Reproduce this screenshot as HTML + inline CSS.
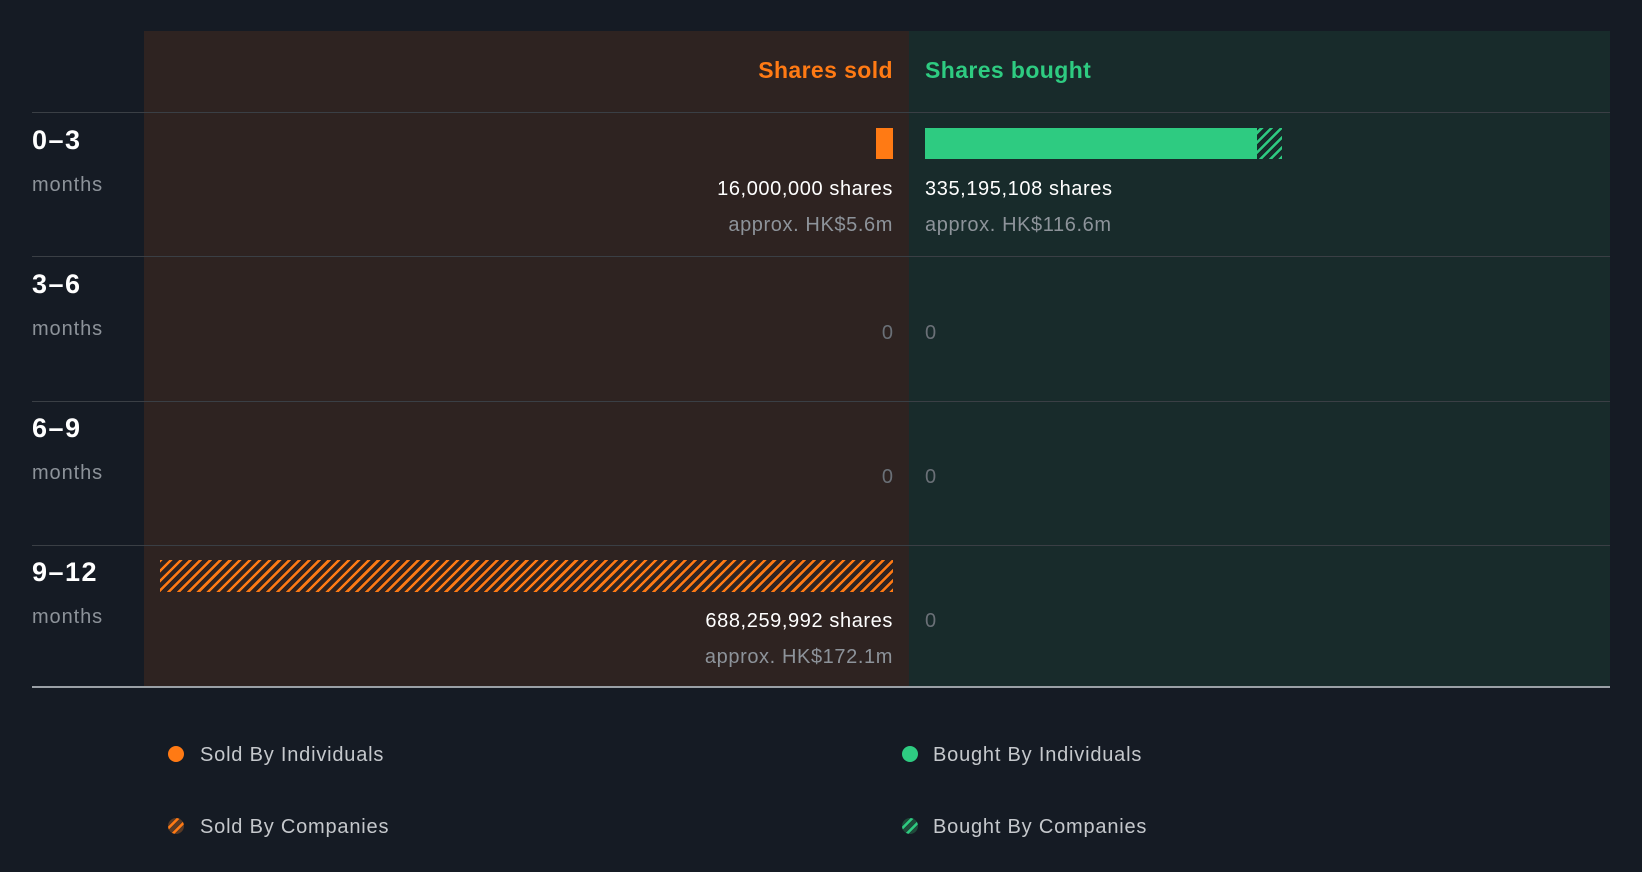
<!DOCTYPE html>
<html><head><meta charset="utf-8"><style>
*{margin:0;padding:0;box-sizing:border-box}
body{width:1642px;height:872px;background:#151b24;font-family:"Liberation Sans",sans-serif;position:relative;overflow:hidden}
.a{position:absolute}
.pl{left:144px;top:31px;width:765px;height:656px;background:#2e2321}
.pr{left:909px;top:31px;width:701px;height:656px;background:#182b2b}
.line{left:32px;width:1578px;height:1px;background:#3a3f45}
.h{font-size:23px;font-weight:bold;top:57px;letter-spacing:0.4px}
.lab{left:32px;color:#fff;font-size:27px;font-weight:bold;letter-spacing:1.5px}
.mo{left:32px;color:#8d939a;font-size:20px;letter-spacing:0.9px}
.sh{color:#fff;font-size:20px;letter-spacing:0.6px}
.ap{color:#8d939a;font-size:20px;letter-spacing:0.6px}
.z{color:#6a7077;font-size:20px}
.r{right:749px;text-align:right}
.lg{color:#c5c8cc;font-size:20px;letter-spacing:0.8px}
.dot{width:16px;height:16px;border-radius:50%}
.hatchO{background:repeating-linear-gradient(-45deg,#ff7a14 0 2.5px,transparent 2.5px 7px)}
.hatchG{background:repeating-linear-gradient(-45deg,#2ecb81 0 2.5px,transparent 2.5px 7px)}
</style></head><body>
<div class="a pl"></div><div class="a pr"></div>
<div class="a h r" style="color:#ff7a14">Shares sold</div>
<div class="a h" style="left:925px;color:#2ecb81">Shares bought</div>
<div class="a line" style="top:112px;left:32px"></div>
<div class="a line" style="top:256px"></div>
<div class="a line" style="top:401px"></div>
<div class="a line" style="top:545px"></div>
<div class="a" style="left:32px;top:686px;width:1578px;height:2px;background:#9aa0a6"></div>

<div class="a lab" style="top:125px">0–3</div><div class="a mo" style="top:174px">months</div>
<div class="a lab" style="top:269px">3–6</div><div class="a mo" style="top:318px">months</div>
<div class="a lab" style="top:413px">6–9</div><div class="a mo" style="top:462px">months</div>
<div class="a lab" style="top:557px">9–12</div><div class="a mo" style="top:606px">months</div>

<div class="a" style="left:876px;top:128px;width:17px;height:31px;background:#ff7a14"></div>
<div class="a" style="left:925px;top:128px;width:332px;height:31px;background:#2ecb81"></div>
<div class="a hatchG" style="left:1257px;top:128px;width:25px;height:31px"></div>
<div class="a sh r" style="top:178px">16,000,000 shares</div>
<div class="a ap r" style="top:214px">approx. HK$5.6m</div>
<div class="a sh" style="left:925px;top:178px">335,195,108 shares</div>
<div class="a ap" style="left:925px;top:214px">approx. HK$116.6m</div>

<div class="a z r" style="top:322px">0</div><div class="a z" style="left:925px;top:322px">0</div>
<div class="a z r" style="top:466px">0</div><div class="a z" style="left:925px;top:466px">0</div>

<div class="a hatchO" style="left:160px;top:560px;width:733px;height:32px"></div>
<div class="a sh r" style="top:610px">688,259,992 shares</div>
<div class="a ap r" style="top:646px">approx. HK$172.1m</div>
<div class="a z" style="left:925px;top:610px">0</div>

<div class="a dot" style="left:168px;top:746px;background:#ff7a14"></div>
<div class="a lg" style="left:200px;top:744px">Sold By Individuals</div>
<div class="a dot hatchO" style="left:168px;top:818px;background-color:#5a3a25"></div>
<div class="a lg" style="left:200px;top:816px">Sold By Companies</div>
<div class="a dot" style="left:902px;top:746px;background:#2ecb81"></div>
<div class="a lg" style="left:933px;top:744px">Bought By Individuals</div>
<div class="a dot hatchG" style="left:902px;top:818px;background-color:#1f4a3a"></div>
<div class="a lg" style="left:933px;top:816px">Bought By Companies</div>
</body></html>
